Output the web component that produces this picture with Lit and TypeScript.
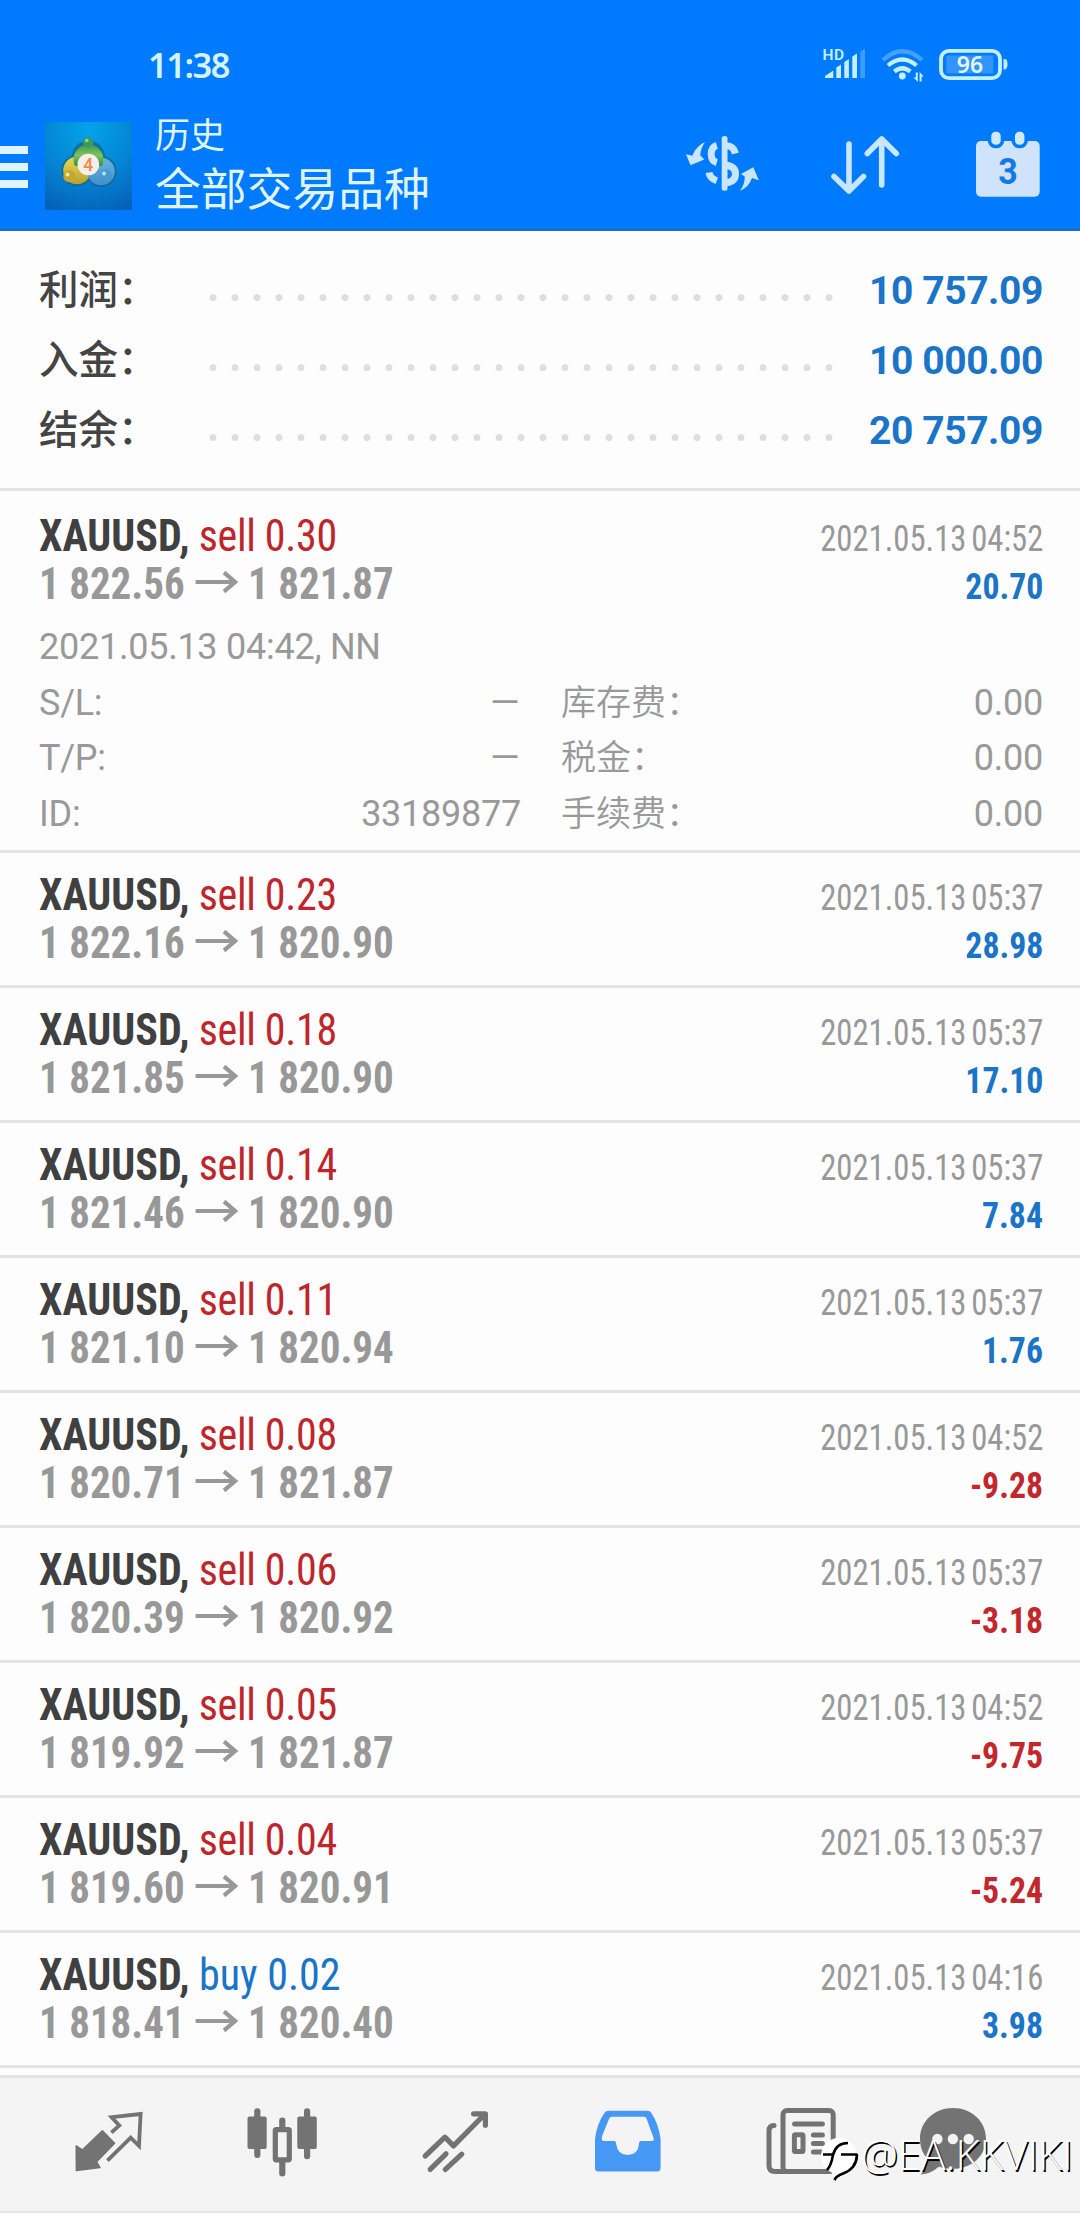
import { LitElement, html, svg, css } from "lit";
import { customElement, property } from "lit/decorators.js";

interface Trade {
  side: "sell" | "buy";
  volume: string;
  open: string;
  close: string;
  time: string;
  profit: string;
  detail?: {
    opened: string;
    left: [string, string][];
    right: [string, string][];
  };
}

const SUMMARY: [string, string][] = [
  ["利润：", "10 757.09"],
  ["入金：", "10 000.00"],
  ["结余：", "20 757.09"],
];

const TRADES: Trade[] = [
  {
    side: "sell", volume: "0.30", open: "1 822.56", close: "1 821.87", time: "2021.05.13 04:52", profit: "20.70",
    detail: {
      opened: "2021.05.13 04:42, NN",
      left: [["S/L:", "–"], ["T/P:", "–"], ["ID:", "33189877"]],
      right: [["库存费：", "0.00"], ["税金：", "0.00"], ["手续费：", "0.00"]],
    },
  },
  { side: "sell", volume: "0.23", open: "1 822.16", close: "1 820.90", time: "2021.05.13 05:37", profit: "28.98" },
  { side: "sell", volume: "0.18", open: "1 821.85", close: "1 820.90", time: "2021.05.13 05:37", profit: "17.10" },
  { side: "sell", volume: "0.14", open: "1 821.46", close: "1 820.90", time: "2021.05.13 05:37", profit: "7.84" },
  { side: "sell", volume: "0.11", open: "1 821.10", close: "1 820.94", time: "2021.05.13 05:37", profit: "1.76" },
  { side: "sell", volume: "0.08", open: "1 820.71", close: "1 821.87", time: "2021.05.13 04:52", profit: "-9.28" },
  { side: "sell", volume: "0.06", open: "1 820.39", close: "1 820.92", time: "2021.05.13 05:37", profit: "-3.18" },
  { side: "sell", volume: "0.05", open: "1 819.92", close: "1 821.87", time: "2021.05.13 04:52", profit: "-9.75" },
  { side: "sell", volume: "0.04", open: "1 819.60", close: "1 820.91", time: "2021.05.13 05:37", profit: "-5.24" },
  { side: "buy", volume: "0.02", open: "1 818.41", close: "1 820.40", time: "2021.05.13 04:16", profit: "3.98" },
];

const NAV = [
  svg`<path fill="#737373" stroke="#737373" stroke-width="1.5" stroke-linejoin="round" d="M7.4 73.6 7.2 49 13.3 53 33.4 33.9 45.6 46.3 27.6 64.8 31 70.6Z"/>
    <path fill="none" stroke="#737373" stroke-width="3.8" d="M42.4 35.7 50.3 28.4 42.6 20.2 71.6 17 70 49 61.7 40.7 38.4 63.6"/>`,
  svg`<g fill="#737373"><rect x="5.5" y="19.5" width="19.2" height="32.4" rx="2"/><rect x="55.3" y="19.5" width="19.5" height="32.4" rx="2"/>
    <rect x="12.2" y="11.3" width="6.2" height="49.6" rx="3"/><rect x="62" y="11.3" width="6.2" height="51" rx="3"/>
    <rect x="37.2" y="20.4" width="6.2" height="12" rx="3"/><rect x="37.2" y="62" width="6.2" height="17.4" rx="3"/></g>
    <rect x="33.3" y="32.6" width="14" height="30.2" rx="1" fill="#f3f3f3" stroke="#737373" stroke-width="5.2"/>`,
  svg`<path fill="none" stroke="#737373" stroke-width="5.2" stroke-linecap="round" stroke-linejoin="round" d="M10.2 59 29.9 40.2 38.5 48.8 70 17M58.6 16.8H70.4V28.2M15.2 72.4 31 56.8M30.4 72.4 46.8 57.2"/>`,
  svg`<path fill="#4598f3" fill-rule="evenodd" d="M20 13.8H60Q62.5 13.8 64 17 70.5 27 72.6 42V71Q72.6 74.5 69 74.5H10.5Q7 74.5 7 71V42Q9 27 16 16.6 17.5 13.8 20 13.8ZM24 19.8Q22 19.8 21.2 21.6L14.3 38.5Q12.6 44 16 44H26.5Q28 44 28.2 47 29.5 58 39.7 58 50 58 51 47 51.2 44 53 44H63.5Q66.8 44 65.4 40.5L58.6 21.8Q58 19.8 56 19.8Z"/>`,
  svg`<g fill="none" stroke="#737373" stroke-width="5" stroke-linecap="round"><rect x="22" y="13.6" width="50.2" height="61" rx="4"/>
    <path d="M13 28.5Q8 28.5 8 34V68.5Q8 74.6 14 74.6H26M33.6 27H61.4M52.4 38H61.4M52.4 46.6H61.4M52.4 55H61.4"/><rect x="33.4" y="37.8" width="8.6" height="16.6" rx="1"/></g>`,
  svg`<path fill="#737373" d="M40 11C58 11 73 24 73 41.500 73 59 58.500 71.800 40 71.800 33 71.800 28 70.500 26 69.500 20 75 13 77.500 7.500 77.300 11.500 74 15 67 14 61 9 55.500 7 49 7 41.500 7 24 22 11 40 11Z"/>
    <g fill="#f3f3f3"><circle cx="24.400" cy="42" r="5.200"/><circle cx="39.900" cy="42" r="5.200"/><circle cx="55.700" cy="42" r="5.200"/></g>`,
];

@customElement("trade-card")
export class TradeCard extends LitElement {
  @property({ attribute: false }) trade!: Trade;

  static styles = css`
    :host { display: block; border-bottom: 3px solid #e3e3e3; padding: 18px 37px 11px 39px; height: 103px; }
    :host([expanded]) { height: auto; padding-top: 21px; padding-bottom: 7px; }
    .line { display: flex; justify-content: space-between; align-items: baseline; height: 48px; line-height: 48px; white-space: pre; font-stretch: 75%; }
    .title, .price { font-size: 44px; transform-origin: left; }
    .title { transform: scaleX(0.955); color: #bf262c; letter-spacing: -0.350px; }
    .title.buy { color: #1a74c8; letter-spacing: 0; }
    .title b { color: #404040; font-weight: 700; letter-spacing: 0; }
    .price { transform: scaleX(0.932); color: #989898; font-weight: 700; }
    .price svg { width: 47px; height: 24px; margin: 0 10px 0 11px; vertical-align: 5px; }
    .time, .profit { transform-origin: right; }
    .time { font-size: 36.500px; color: #989898; transform: scaleX(0.895); word-spacing: -3px; }
    .profit { font-size: 36.500px; font-weight: 700; color: #1a74c8; transform: scaleX(0.925); }
    .profit.neg { color: #c1272d; }
    .detail { margin-top: 12px; color: #999; font-size: 36px; line-height: 55.700px; font-weight: 400; letter-spacing: -0.250px; }
    .cols { display: grid; grid-template-columns: 482px 482px; column-gap: 40px; }
    .pair { display: flex; justify-content: space-between; align-items: baseline; height: 55.700px; }
    .pair .cjk { font-size: 35px; font-weight: 350; letter-spacing: 0; }
    .dash { transform: scaleX(1.400); transform-origin: right; }
  `;

  render() {
    const t = this.trade;
    const d = t.detail;
    return html`
      <div class="line">
        <span class="title ${t.side}"><b>XAUUSD,</b> ${t.side} ${t.volume}</span>
        <span class="time">${t.time}</span>
      </div>
      <div class="line">
        <span class="price">${t.open}<svg viewBox="0 0 47 24" fill="none" stroke="#989898" stroke-width="4.200"><path d="M1 12H44M31.500 2.500 43.500 12 31.500 21.500"/></svg>${t.close}</span>
        <span class="profit ${t.profit.startsWith("-") ? "neg" : ""}">${t.profit}</span>
      </div>
      ${d
        ? html`<div class="detail">
            <div class="opened">${d.opened}</div>
            <div class="cols">
              <div>${d.left.map(([k, v]) => html`<div class="pair"><span>${k}</span><span class=${v === "–" ? "dash" : ""}>${v}</span></div>`)}</div>
              <div>${d.right.map(([k, v]) => html`<div class="pair"><span class="cjk">${k}</span><span>${v}</span></div>`)}</div>
            </div>
          </div>`
        : ""}
    `;
  }
}

@customElement("app-root")
export class AppRoot extends LitElement {
  static styles = css`
    :host { display: flex; flex-direction: column; width: 1080px; height: 2215px; overflow: hidden; position: relative; background: #fdfdfd;
      font-family: Roboto, "Noto Sans CJK SC", sans-serif; }
    .header { height: 229px; background: #007aff; border-bottom: 2px solid #1f6bb8; color: #dff4ff; }
    .status { display: flex; justify-content: space-between; height: 100px; padding: 0 63px 0 148px; }
    .clock { font-family: "Noto Sans", sans-serif; font-weight: 600; font-size: 34.500px; line-height: 130px; color: #d3f3ff; letter-spacing: -1.500px; }
    .sys { width: 200px; height: 50px; margin-top: 40px; }
    .bar { display: flex; height: 129px; }
    .menu { width: 28px; display: flex; flex-direction: column; gap: 9px; padding-top: 46px; }
    .menu i { height: 8px; background: #dff4ff; }
    .logo { width: 87px; height: 88px; margin: 22px 0 0 17px; }
    .names { flex: 1; padding: 14px 0 0 23px; }
    .small { font-size: 35px; line-height: 46px; }
    .large { font-size: 45.800px; line-height: 60px; margin-top: 1px; }
    .actions { display: flex; gap: 63px; padding: 24px 32px 0 0; }
    .actions svg { width: 80px; height: 80px; }
    .summary { height: 232px; padding: 25px 37px 0 39px; border-bottom: 3px solid #e3e3e3; }
    .sum { display: flex; align-items: baseline; height: 70px; line-height: 70px; }
    .label { width: 163px; font-size: 39.500px; font-weight: 500; color: #444; }
    .dots { width: 638px; height: 70px; align-self: stretch; background: radial-gradient(circle at 11px 41.600px, #dedede 3px, transparent 4px) 0 0 / 22px 70px; }
    .amount { flex: 1; text-align: right; font-size: 39px; font-weight: 700; color: #1a74c8; letter-spacing: -0.400px; }
    .nav { margin-top: 7px; height: 133px; display: flex; padding-left: 22px; background: #f4f4f4; border-top: 3px solid #e3e3e3; border-bottom: 2px solid #e6e6e6; }
    .tab { width: 173px; display: flex; justify-content: center; padding-top: 19px; }
    .tab:last-child { width: 131px; }
    .tab svg { width: 80px; height: 80px; }
    .mark { position: absolute; left: 820px; top: 2136px; display: flex; color: #fff; }
    .mark svg { width: 41px; height: 46px; }
    .mark span { font: 300 41.500px/36px "Open Sans", sans-serif; text-shadow: 1.500px 1.500px 0 #000; }
  `;

  render() {
    return html`
      <div class="header">
        <div class="status">
          <span class="clock">11:38</span>
          <svg class="sys" viewBox="0 0 200 50" fill="#c3efff">
            <text x="5.500" y="19.500" font-family="Roboto" font-weight="600" font-size="15.500" letter-spacing="0.600">HD</text>
            <path d="M8 38V36L16.300 30.500V38ZM19.300 38V27.500L24 24.500V38ZM27.300 38V22L31.900 19V38ZM35.300 38V16.500L40 13.500V38Z"/>
            <path opacity=".3" d="M43.300 38V11.500L48 8.800V38Z"/>
            <g fill="none" stroke="#c3efff" stroke-width="4.200">
              <path opacity=".35" d="M66 20Q85.300 2.500 105 20"/><path d="M71 25.500Q85.300 13.500 99.600 25.500"/><path d="M77.300 31.500Q85.300 25 93.300 31.500"/>
            </g>
            <circle cx="85.300" cy="36" r="3.400"/>
            <path d="M98.800 32.500H100.800V42L96.500 37.500H98.800ZM102.600 41.500V32L106.800 36.500H104.600V41.500Z"/>
            <rect x="124" y="10.800" width="59" height="27.400" rx="8" fill="none" stroke="#c3efff" stroke-width="3.800"/>
            <rect x="129.300" y="15.500" width="47" height="18" fill="#fff" opacity=".2"/>
            <path d="M186.500 19H188Q190.500 19.500 190.500 24 190.500 28.500 188 29.500H186.500Z"/>
            <text x="153" y="33" text-anchor="middle" font-family="Noto Sans" font-weight="600" font-size="23" fill="#e2f8ff">96</text>
          </svg>
        </div>
        <div class="bar">
          <div class="menu"><i></i><i></i><i></i></div>
          <svg class="logo" viewBox="0 0 87 88">
            <defs>
              <radialGradient id="bg" cx=".5" cy=".1" r="1"><stop offset="0" stop-color="#04a3ea"/><stop offset=".55" stop-color="#0583d2"/><stop offset="1" stop-color="#045fb8"/></radialGradient>
              <linearGradient id="gr" x2="0" y2="1"><stop offset="0" stop-color="#3f9a50"/><stop offset=".5" stop-color="#7fc25c"/><stop offset="1" stop-color="#2f8f4a"/></linearGradient>
              <linearGradient id="ye" x2="0" y2="1"><stop offset="0" stop-color="#e6dc55"/><stop offset="1" stop-color="#b89f2c"/></linearGradient>
              <linearGradient id="bl" x2="0" y2="1"><stop offset="0" stop-color="#6bb4dc"/><stop offset="1" stop-color="#3f8fd0"/></linearGradient>
            </defs>
            <rect width="87" height="88" fill="url(#bg)"/>
            <g fill="#1c5d6c" opacity=".6"><circle cx="32" cy="48.500" r="15.500"/><circle cx="56" cy="49.500" r="15.500"/><circle cx="43.300" cy="35" r="16.500"/></g>
            <circle cx="32" cy="48.500" r="13.800" fill="url(#ye)"/><circle cx="56" cy="49.500" r="13.800" fill="url(#bl)"/>
            <path fill="url(#gr)" d="M30 44A15 15 0 1 1 57 44Z"/>
            <circle cx="43.300" cy="20.500" r="5.200" fill="#3f9a58"/><circle cx="41.800" cy="18.500" r="1.800" fill="#9bd49a"/>
            <circle cx="24.300" cy="54.300" r="6" fill="#c3a731"/><circle cx="22.500" cy="52.500" r="2" fill="#f2e896"/>
            <circle cx="60.500" cy="53.300" r="6" fill="#4a97cf"/><circle cx="59" cy="51.500" r="2" fill="#b9def2"/>
            <circle cx="43.300" cy="42.500" r="10.800" fill="#f4efe9"/>
            <text x="43.300" y="48.800" text-anchor="middle" font-family="Roboto" font-weight="500" font-size="17.500" fill="#ee8a45">4</text>
          </svg>
          <div class="names"><div class="small">历史</div><div class="large">全部交易品种</div></div>
          <div class="actions">
            <svg viewBox="0 0 80 80" fill="#c9e6ff">
              <rect x="39.700" y="12" width="5.800" height="54.800" rx="2.500"/>
              <path d="M8.500 41.300 4 30.300 10.300 31.800Q14 22 23 18 18.300 25 18.300 31.600L22.300 35.600Z"/>
              <path d="M71.300 43.300 76.800 56.200 70 54Q67 63 58 66.800 63 60 62.800 52.500L59 50Z"/>
              <g fill="none" stroke="#c9e6ff" stroke-width="7"><path d="M34.800 21.300Q29.200 23 29.200 30T34.800 38.600M27 48.500Q28 54.500 34.800 56.800"/><path d="M44.500 21.800Q51.500 22 53.500 29.500M44.500 41.200Q53.500 42.500 53.500 50T44.500 58.800"/></g>
            </svg>
            <svg viewBox="0 0 80 80" fill="none" stroke="#c9e6ff" stroke-width="5.600" stroke-linecap="round" stroke-linejoin="round">
              <path d="M24 20V67M9 52.500 24 67 38.500 52.500M56.700 61V15M42.300 29.500 56.700 15 71.300 29.500"/>
            </svg>
            <svg viewBox="0 0 80 80">
              <rect x="8" y="17" width="63.700" height="55.700" rx="5" fill="#cfe4fc"/>
              <g fill="#cfe9ff" stroke="#007aff" stroke-width="3.500"><rect x="21.500" y="6" width="13" height="16.500" rx="6"/><rect x="45.200" y="6" width="13" height="16.500" rx="6"/></g>
              <text x="40" y="60" text-anchor="middle" font-family="Roboto" font-weight="700" font-size="37" textLength="19.500" lengthAdjust="spacingAndGlyphs" fill="#1479e6">3</text>
            </svg>
          </div>
        </div>
      </div>
      <div class="summary">
        ${SUMMARY.map(([k, v]) => html`<div class="sum"><span class="label">${k}</span><span class="dots"></span><span class="amount">${v}</span></div>`)}
      </div>
      ${TRADES.map((t) => html`<trade-card .trade=${t} ?expanded=${!!t.detail}></trade-card>`)}
      <div class="nav">${NAV.map((i) => html`<div class="tab"><svg viewBox="0 0 80 80">${i}</svg></div>`)}</div>
      <div class="mark">
        <svg viewBox="0 0 41 46">
          <path fill="#000" d="M38 18Q38.500 33 23 38.500 16 41 15 45.500 14 40 20 36 33 30 36 17Z"/>
          <circle cx="19" cy="20" r="18" fill="#fff"/>
          <path fill="#fff" d="M12 36Q12 42 15.500 44 18 38 26 35Z"/>
          <path fill="none" stroke="#000" stroke-width="2.600" d="M7 34Q11 30 13 19 16 7 28 7M3 18.500H14M21 18.500H37M37 19Q36 33 23 37.500 16 40 14.500 44"/>
        </svg>
        <span>@EA.KKVIKI</span>
      </div>
    `;
  }
}
